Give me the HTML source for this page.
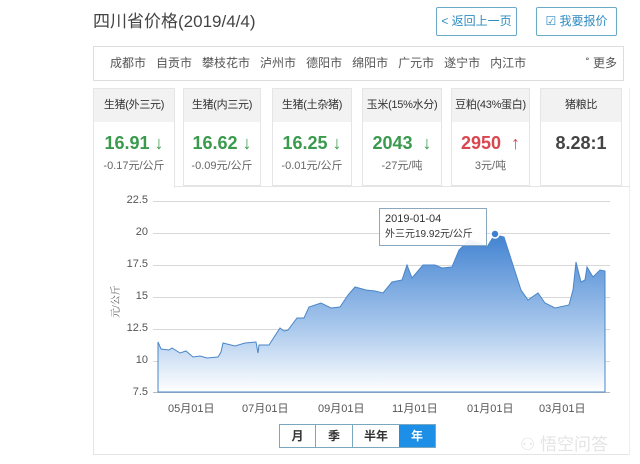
<!DOCTYPE html>
<html><head><meta charset="utf-8"><style>
*{margin:0;padding:0;box-sizing:border-box}
body{width:640px;height:464px;background:#fff;font-family:"Liberation Sans","Noto Sans CJK SC",sans-serif;position:relative;overflow:hidden;color:#333}
.abs{position:absolute}
.btn{position:absolute;top:7px;height:29px;border:1px solid #6aa9c9;border-radius:2px;color:#2e8bc0;font-size:12px;line-height:27px;text-align:center}
.city{position:absolute;left:93px;top:46px;width:531px;height:35px;border:1px solid #ddd;font-size:12px;color:#555;line-height:33px;padding-left:16px;word-spacing:0}
.city span{margin-right:10px}
.card{position:absolute;top:88px;height:98px;border:1px solid #e5e5e5;background:#fff;text-align:center}
.card .h{height:33px;background:#f2f2f2;font-size:11px;line-height:33px;color:#333;white-space:nowrap;letter-spacing:-0.3px}
.card .v{font-size:18px;font-weight:bold;margin-top:10px;line-height:22px;white-space:nowrap}
.card .s{font-size:11px;color:#666;margin-top:3px}
.g{color:#3a9a4e}.r{color:#d9464f}
.yl{position:absolute;font-size:11px;color:#555;text-align:right;width:40px;left:108px}
.xl{position:absolute;top:400px;font-size:11px;color:#555}
</style></head><body>
<div class="abs" style="left:93px;top:7px;font-size:17px;color:#444">四川省价格(2019/4/4)</div>
<div class="btn" style="left:436px;width:81px">&lt; 返回上一页</div>
<div class="btn" style="left:536px;width:81px">☑ 我要报价</div>
<div class="city"><span>成都市</span><span>自贡市</span><span>攀枝花市</span><span>泸州市</span><span>德阳市</span><span>绵阳市</span><span>广元市</span><span>遂宁市</span><span>内江市</span><span style="position:absolute;right:6px;margin:0">˚ 更多</span></div>
<div class="abs" style="left:93px;top:88px;width:537px;height:367px;border-left:1px solid #e5e5e5;border-bottom:1px solid #e5e5e5;border-right:1px solid #eee"></div>
<div class="card" style="left:93px;width:82px;height:100px;border-bottom:none"><div class="h">生猪(外三元)</div><div class="v g">16.91 ↓</div><div class="s">-0.17元/公斤</div></div>
<div class="card" style="left:183px;width:78px"><div class="h">生猪(内三元)</div><div class="v g">16.62 ↓</div><div class="s">-0.09元/公斤</div></div>
<div class="card" style="left:272px;width:80px"><div class="h">生猪(土杂猪)</div><div class="v g">16.25 ↓</div><div class="s">-0.01元/公斤</div></div>
<div class="card" style="left:362px;width:80px"><div class="h">玉米(15%水分)</div><div class="v g">2043 &nbsp;↓</div><div class="s">-27元/吨</div></div>
<div class="card" style="left:451px;width:79px"><div class="h">豆粕(43%蛋白)</div><div class="v r">2950 &nbsp;↑</div><div class="s">3元/吨</div></div>
<div class="card" style="left:540px;width:82px"><div class="h">猪粮比</div><div class="v" style="color:#444">8.28:1</div></div>
<div class="abs" style="left:175px;top:186px;width:455px;height:1px;background:#e5e5e5"></div>
<svg class="abs" style="left:0;top:0" width="640" height="464">
<defs><linearGradient id="gr" gradientUnits="userSpaceOnUse" x1="0" y1="230" x2="0" y2="392"><stop offset="0" stop-color="#3d7fd0"/><stop offset="0.6" stop-color="#a9c8ec"/><stop offset="1" stop-color="#ffffff"/></linearGradient></defs>
<g stroke="#d8d8d8" stroke-width="1">
<line x1="153" y1="201.5" x2="610" y2="201.5"/><line x1="153" y1="233.5" x2="610" y2="233.5"/><line x1="153" y1="265.5" x2="610" y2="265.5"/><line x1="153" y1="297.5" x2="610" y2="297.5"/><line x1="153" y1="329.5" x2="610" y2="329.5"/><line x1="153" y1="361.5" x2="610" y2="361.5"/><line x1="153" y1="392.5" x2="610" y2="392.5" stroke="#bbb"/>
</g>
<path fill="url(#gr)" stroke="#4a86c8" stroke-width="1" d="M158,342 L161,349 169,350 172,348 180,353 186,351 193,357 200,356 207,358 218,357 221,352 223,343 235,346 245,343 256,342 258,353 259,345 269,345 280,328 284,331 288,330 297,318 304,318 309,307 321,303 331,308 340,307 348,295 355,287 366,290 375,291 383,293 392,282 402,280 407,265 412,278 423,265 435,265 442,268 452,267 459,250 469,240 480,243 487,247 495,234 500,236 504,237 512,262 521,290 528,300 538,293 545,303 555,308 569,305 573,290 576,262 581,282 585,280 587,267 593,277 600,270 605,271 L605,392 L158,392 Z"/>
<circle cx="495" cy="234" r="4" fill="#3d7fd0" stroke="#fff" stroke-width="1.5"/>
<rect x="379.5" y="208.5" width="107" height="37" fill="#fff" fill-opacity="0.92" stroke="#8aa8c0"/>
<text x="385" y="222" font-size="11" fill="#333" font-family="Liberation Sans">2019-01-04</text>
<text x="385" y="237" font-size="10" fill="#333" font-family="Liberation Sans,Noto Sans CJK SC">外三元19.92元/公斤</text>
<text transform="translate(119,318) rotate(-90)" font-size="10" fill="#555" font-family="Liberation Serif,Noto Serif CJK SC">元/公斤</text>
</svg>
<div class="yl" style="top:194px">22.5</div><div class="yl" style="top:226px">20</div><div class="yl" style="top:258px">17.5</div><div class="yl" style="top:290px">15</div><div class="yl" style="top:322px">12.5</div><div class="yl" style="top:354px">10</div><div class="yl" style="top:386px">7.5</div>
<div class="xl" style="left:168px">05月01日</div><div class="xl" style="left:242px">07月01日</div><div class="xl" style="left:318px">09月01日</div><div class="xl" style="left:392px">11月01日</div><div class="xl" style="left:467px">01月01日</div><div class="xl" style="left:539px">03月01日</div>
<div class="abs" style="left:279px;top:424px;width:157px;height:24px;border:1px solid #7aa7c0;display:flex;font-size:12px;font-weight:bold;line-height:22px;text-align:center">
<div style="width:36px;border-right:1px solid #7aa7c0">月</div><div style="width:37px;border-right:1px solid #7aa7c0">季</div><div style="width:46px">半年</div><div style="width:36px;background:#1e8fe6;color:#fff">年</div></div>
<div class="abs" style="left:520px;top:430px;font-size:17px;color:#e4e4e4">⚇ 悟空问答</div>
</body></html>
